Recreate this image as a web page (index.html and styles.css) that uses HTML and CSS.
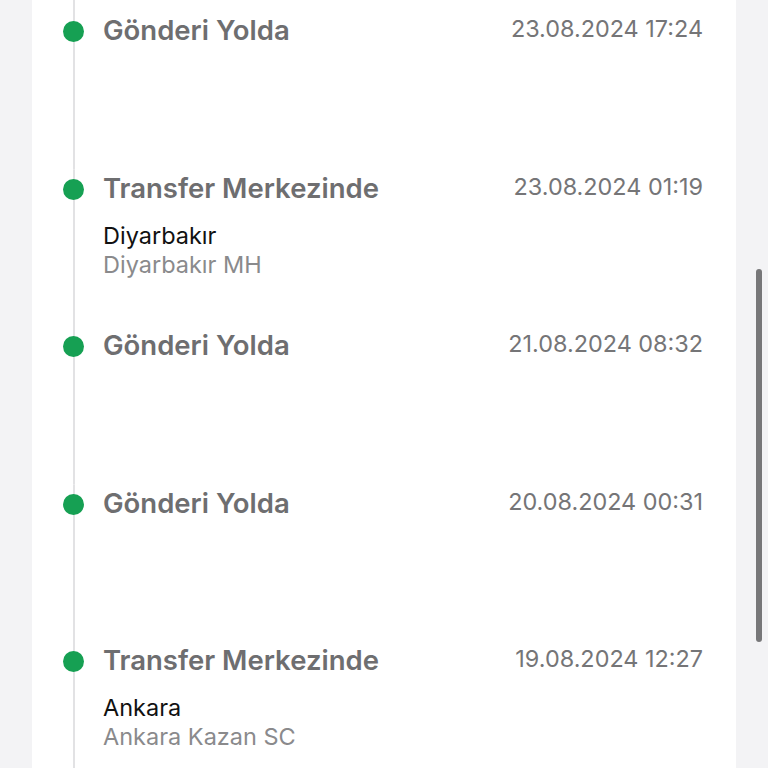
FILE: index.html
```html
<!DOCTYPE html>
<html lang="tr">
<head>
    <meta charset="UTF-8">
    <meta name="viewport" content="width=device-width, initial-scale=1.0">
    <title>Gönderi Hareketleri</title>
    <link rel="stylesheet" href="styles.css">
</head>
<body>
    <div class="card">
        <div class="item">
            <div class="rail"><span class="dot"></span></div>
            <div class="info">
                <div class="title">Gönderi Yolda</div>
            </div>
            <div class="date">23.08.2024 17:24</div>
        </div>
        <div class="item">
            <div class="rail"><span class="dot"></span></div>
            <div class="info">
                <div class="title">Transfer Merkezinde</div>
                <div class="city">Diyarbakır</div>
                <div class="branch">Diyarbakır MH</div>
            </div>
            <div class="date">23.08.2024 01:19</div>
        </div>
        <div class="item">
            <div class="rail"><span class="dot"></span></div>
            <div class="info">
                <div class="title">Gönderi Yolda</div>
            </div>
            <div class="date">21.08.2024 08:32</div>
        </div>
        <div class="item">
            <div class="rail"><span class="dot"></span></div>
            <div class="info">
                <div class="title">Gönderi Yolda</div>
            </div>
            <div class="date">20.08.2024 00:31</div>
        </div>
        <div class="item">
            <div class="rail"><span class="dot"></span></div>
            <div class="info">
                <div class="title">Transfer Merkezinde</div>
                <div class="city">Ankara</div>
                <div class="branch">Ankara Kazan SC</div>
            </div>
            <div class="date">19.08.2024 12:27</div>
        </div>
    </div>
    <div class="scroll-thumb"></div>
</body>
</html>
```

FILE: styles.css
```css
body{
    margin: 0;
    background-color: #f3f3f5;
    font-family: Inter, "Noto Sans", sans-serif;
    overflow: hidden;
}
.card{
    margin-left: 32px;
    width: 704px;
    min-height: 800px;
    background-color: #ffffff;
    padding-right: 33px;
    padding-left: 31px;
    box-sizing: border-box;
}
.item{
    display: flex;
    height: 157.5px;
}
/* card is scrolled, so the first row starts above the window */
.item:first-child{
    margin-top: -100px;
    padding-top: 112px;
}
.item:first-child .rail{
    margin-top: -112px;
    padding-top: 112px;
}
.rail{
    width: 21px;
    flex-shrink: 0;
    margin-right: 19px;
    background: linear-gradient(#e2e2e4, #e2e2e4) center / 2px 100% no-repeat;
}
.dot{
    display: block;
    width: 21px;
    height: 21px;
    border-radius: 50%;
    background-color: #16a053;
    margin-top: 9px;
}
.info{
    flex: 1;
}
.title{
    font-size: 27.5px;
    font-weight: 600;
    color: #6e6e70;
    line-height: 36px;
    margin-bottom: 15px;
}
.city{
    font-size: 23.5px;
    color: #111111;
    line-height: 29px;
}
.branch{
    font-size: 23.5px;
    color: #8a8a8c;
    line-height: 29px;
}
.date{
    font-size: 23.4px;
    color: #757577;
    line-height: 34px;
}
.scroll-thumb{
    position: fixed;
    left: 756px;
    top: 269px;
    width: 6px;
    height: 373px;
    border-radius: 3px;
    background-color: #777779;
}
```
